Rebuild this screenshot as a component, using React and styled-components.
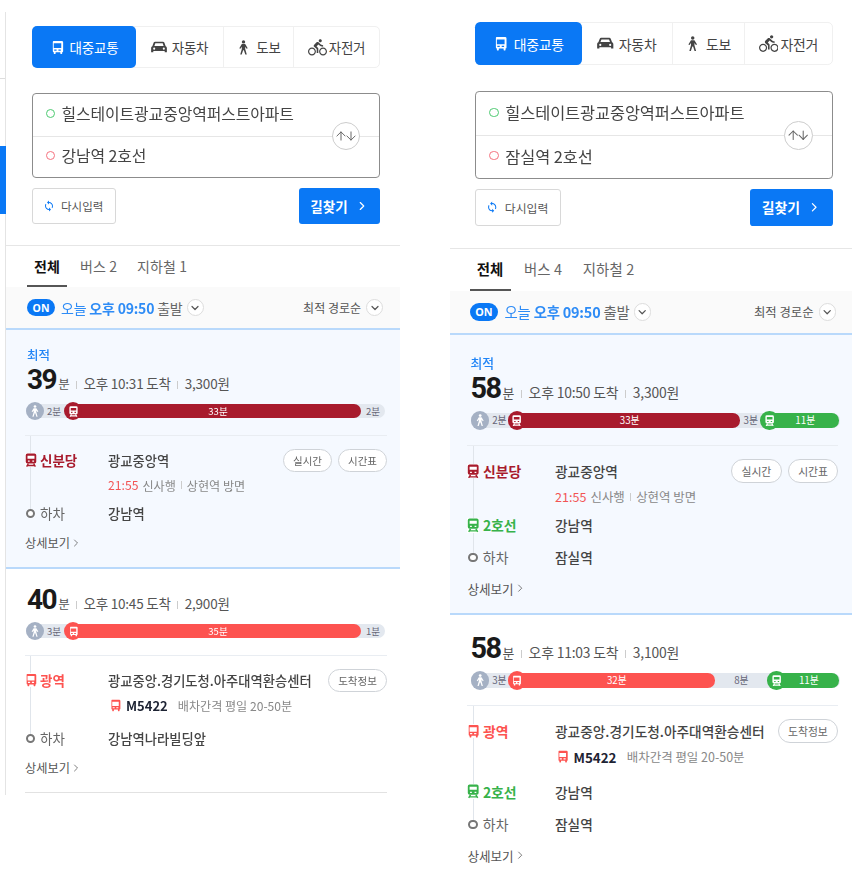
import React from "react";
import styled, { createGlobalStyle } from "styled-components";
import { ChevronDown, ChevronRight, ArrowUp, ArrowDown } from "lucide-react";
import { MdDirectionsBike, MdSync } from "react-icons/md";

const Global = createGlobalStyle`
  html, body { margin: 0; padding: 0; background: #fff; height: 870px; overflow: hidden; }
  * { box-sizing: border-box; }
  body { font-family: "Noto Sans CJK KR", "Noto Sans", sans-serif; color: #333; }
`;

const BLUE = "#0a78f5";
const WINE = "#a81b2d";
const RED = "#fd5350";
const GREEN = "#37b24a";

const Page = styled.div`
  display: flex;
  align-items: flex-start;
  width: 852px;
  height: 870px;
  overflow: hidden;
  filter: blur(0.35px);
`;
const Rail = styled.div`
  flex: none;
  width: 6px;
  height: 783px;
  margin-top: 12px;
  border-right: 1px solid #e4e4e4;
  padding-top: 134px;
  position: relative;
  &::before {
    content: "";
    position: absolute;
    left: 0;
    top: 66px;
    width: 5px;
    height: 1px;
    background: #ddd;
  }
`;
const RailMark = styled.div`
  width: 6px;
  height: 68px;
  background: ${BLUE};
`;
const Panel = styled.section`
  flex: none;
  width: ${p => p.$width}px;
  margin-left: ${p => p.$offset}px;
  zoom: ${p => p.$zoom};
  background: #fff;
`;
const Search = styled.div`
  padding: ${p => p.$top}px 0 21px ${p => p.$inset}px;
  border-bottom: 1px solid #e6e6e6;
`;
const Modes = styled.div`
  display: grid;
  grid-template-columns: 103px 87px 70px 86px;
  width: 348px;
  height: 42px;
  border: 1px solid #f0f0f0;
  border-radius: 5px;
`;
const Mode = styled.div`
  display: flex;
  align-items: center;
  justify-content: center;
  gap: ${p => p.$gap || 5}px;
  margin: ${p => (p.$active ? "-1px 0 -1px -1px" : "0")};
  font-size: 13.5px;
  letter-spacing: -0.2px;
  color: ${p => (p.$active ? "#fff" : "#444")};
  background: ${p => (p.$active ? BLUE : "transparent")};
  border-radius: ${p => (p.$active ? "5px" : "0")};
  border-left: ${p => (p.$divided ? "1px solid #f0f0f0" : "none")};
`;
const Route = styled.div`
  position: relative;
  width: 348px;
  height: 85px;
  margin-top: 25px;
  border: 1px solid #8c8c8c;
  border-radius: 4px;
`;
const Place = styled.div`
  display: flex;
  align-items: center;
  gap: 6.5px;
  height: 41.5px;
  padding: 0 0 2px 13px;
  font-size: 15.9px;
  letter-spacing: -0.1px;
  color: #444;
  & + & { border-top: 1px solid #e6e6e6; }
`;
const Dot = styled.span`
  flex: none;
  width: 9px;
  height: 9px;
  border-radius: 50%;
  border: 1.5px solid ${p => p.$color};
`;
const Swap = styled.div`
  position: absolute;
  right: 19px;
  top: 28px;
  width: 28px;
  height: 28px;
  display: flex;
  align-items: center;
  justify-content: center;
  border: 1px solid #ccc;
  border-radius: 50%;
  background: #fff;
  color: #666;
`;
const Actions = styled.div`
  display: flex;
  justify-content: space-between;
  width: 348px;
  margin-top: 10px;
`;
const Reset = styled.div`
  display: flex;
  align-items: center;
  gap: 6px;
  width: 84px;
  height: 36px;
  padding-left: 10px;
  border: 1px solid #d8d8d8;
  border-radius: 3px;
  font-size: 11.5px;
  color: #555;
`;
const Go = styled.div`
  display: flex;
  align-items: center;
  justify-content: center;
  gap: 7px;
  width: 81px;
  height: 36px;
  background: ${BLUE};
  color: #fff;
  border-radius: 3px;
  font-size: 13.5px;
  font-weight: 700;
`;
const Tabs = styled.nav`
  display: flex;
  height: 41px;
  padding-left: ${p => p.$inset}px;
`;
const Tab = styled.div`
  display: flex;
  align-items: center;
  padding: 0 7px;
  margin-right: 6px;
  font-size: 14px;
  letter-spacing: 0.1px;
  color: ${p => (p.$active ? "#111" : "#666")};
  font-weight: ${p => (p.$active ? 700 : 400)};
  border-bottom: 2px solid ${p => (p.$active ? "#555" : "transparent")};
`;
const Filter = styled.div`
  display: flex;
  align-items: center;
  justify-content: space-between;
  height: 41px;
  padding: 0 ${p => 17 - p.$edge}px 0 ${p => 21 - p.$edge}px;
  background: #fafafa;
`;
const FilterGroup = styled.div`
  display: flex;
  align-items: center;
  gap: ${p => p.$gap}px;
`;
const OnPill = styled.span`
  display: inline-flex;
  align-items: center;
  justify-content: center;
  width: 28px;
  height: 17px;
  margin-right: 2px;
  background: ${BLUE};
  color: #fff;
  border-radius: 9px;
  font-family: "Noto Sans", sans-serif;
  font-size: 10.5px;
  font-weight: 700;
`;
const DepartText = styled.span`
  font-size: 14px;
  letter-spacing: -0.2px;
  color: #666;
`;
const Blue = styled.span`
  color: ${BLUE};
  opacity: 0.85;
  font-weight: ${p => (p.$bold ? 700 : 400)};
`;
const SortText = styled.span`
  font-size: 12px;
  color: #555;
`;
const Caret = styled.span`
  display: inline-flex;
  align-items: center;
  justify-content: center;
  width: 17px;
  height: 17px;
  border: 1px solid #ddd;
  border-radius: 50%;
  background: #fff;
  color: #555;
`;
const Card = styled.article`
  padding: ${p => p.$lead}px 13px 16px ${p => 19 - p.$edge}px;
  background: ${p => (p.$best ? "#f5f9ff" : "#fff")};
  ${p => (p.$best ? "border-top: 2px solid #b9d9fb; border-bottom: 2px solid #b9d9fb;" : "")}
`;
const CardEnd = styled.div`
  margin: 0 13px 0 19px;
  height: 1px;
  background: #e2e2e2;
`;
const BestTag = styled.div`
  margin-left: ${p => 2 + p.$edge / 2}px;
  height: 18px;
  line-height: 16px;
  font-size: 12.5px;
  color: ${BLUE};
  font-weight: 500;
  opacity: 0.9;
`;
const Summary = styled.div`
  display: flex;
  align-items: baseline;
  height: 30px;
  line-height: 30px;
  margin-left: ${p => 2 + p.$edge / 2}px;
  color: #555;
  font-size: 13.5px;
  letter-spacing: -0.2px;
`;
const Minutes = styled.strong`
  font-family: Roboto, "Liberation Sans", sans-serif;
  font-size: 28px;
  font-weight: 700;
  letter-spacing: -1.5px;
  color: #1a1a1a;
`;
const Unit = styled.span`
  font-size: 12.5px;
  margin-left: 2px;
`;
const Sep = styled.span`
  display: inline-block;
  width: 1px;
  height: 8px;
  margin: 0 6.5px;
  background: #ccc;
`;
const Track = styled.div`
  display: flex;
  align-items: center;
  width: 359px;
  height: 14px;
  margin: 9px 0 0 ${p => 1 + p.$edge}px;
  background: #e3e8ef;
  border-radius: 7px;
`;
const WalkSeg = styled.div`
  flex: none;
  display: flex;
  align-items: center;
  gap: 3px;
  width: ${p => p.$w}px;
  font-size: 9.5px;
  color: #667;
`;
const WalkBadge = styled.span`
  flex: none;
  display: flex;
  align-items: center;
  justify-content: center;
  width: 18px;
  height: 18px;
  border-radius: 50%;
  background: #a5b1c4;
  color: #fff;
`;
const RideSeg = styled.div`
  flex: none;
  position: relative;
  display: flex;
  align-items: center;
  justify-content: center;
  width: ${p => p.$w}px;
  height: 14px;
  padding-left: 10px;
  background: ${p => p.$color};
  border-radius: 7px;
  font-size: 9.5px;
  color: #fff;
`;
const RideBadge = styled.span`
  position: absolute;
  left: -1px;
  top: -2px;
  width: 18px;
  height: 18px;
  display: flex;
  align-items: center;
  justify-content: center;
  border-radius: 50%;
  background: ${p => p.$color};
  color: #fff;
`;
const GapSeg = styled.div`
  flex: none;
  width: ${p => p.$w}px;
  text-align: center;
  font-size: 9.5px;
  color: #667;
`;
const Legs = styled.div`
  position: relative;
  margin-top: 17px;
  padding-top: 12px;
  border-top: 1px solid #e9edf2;
  &::before {
    content: "";
    position: absolute;
    left: 5px;
    top: 0;
    bottom: 12px;
    width: 1px;
    background: #e0e5eb;
  }
`;
const Leg = styled.div`
  position: relative;
  display: grid;
  grid-template-columns: ${p => 83 + p.$edge}px 1fr auto;
  align-items: center;
  height: 24px;
  margin-top: ${p => p.$gap || 0}px;
`;
const LegLabel = styled.div`
  display: flex;
  align-items: center;
  gap: 4px;
  font-size: 13.5px;
  font-weight: ${p => (p.$plain ? 400 : 700)};
  color: ${p => p.$color};
`;
const LegIcon = styled.span`
  display: flex;
  width: 11px;
  height: 14px;
  align-items: center;
  justify-content: center;
  background: #fff;
`;
const StopRing = styled.span`
  flex: none;
  width: 9px;
  height: 9px;
  margin: 0 1px 0 1px;
  border-radius: 50%;
  border: 2px solid #777;
  background: #fff;
`;
const Stop = styled.div`
  font-size: 13.3px;
  font-weight: 500;
  color: #444;
  white-space: nowrap;
`;
const Pills = styled.div`
  display: flex;
  gap: 6px;
`;
const Pill = styled.span`
  display: flex;
  align-items: center;
  justify-content: center;
  width: ${p => p.$w}px;
  height: 23px;
  border: 1px solid #cfd3d8;
  border-radius: 12px;
  background: #fff;
  font-size: 10.5px;
  color: #666;
`;
const Note = styled.div`
  display: flex;
  align-items: center;
  height: 24px;
  margin: 1px 0 0 ${p => 83 + p.$edge}px;
  font-size: 12.1px;
  color: #888;
`;
const Clock = styled.span`
  color: #f25454;
  margin-right: 4px;
  font-size: 12.2px;
`;
const NoteSep = styled.span`
  display: inline-block;
  width: 1px;
  height: 8px;
  margin: 0 5px;
  background: #ccc;
`;
const BusNo = styled.span`
  display: flex;
  align-items: center;
  gap: 4px;
  margin: 0 10px 0 1px;
  font-size: 13px;
  font-weight: 700;
  color: #1d2333;
`;
const More = styled.div`
  display: flex;
  align-items: center;
  height: 16px;
  margin-top: 10px;
  font-size: 12.2px;
  color: #555;
`;

const BusIcon = ({ size = 14, color = "currentColor" }) => (
  <svg width={size} height={size} viewBox="0 0 16 16" fill="none" style={{ flex: "none" }}>
    <path fillRule="evenodd" clipRule="evenodd" fill={color}
      d="M3.500 1h9A1.500 1.500 0 0 1 14 2.500V12a1 1 0 0 1-1 1v1.500a.5.5 0 0 1-.5.5h-1a.5.5 0 0 1-.5-.5V13H6v1.500a.5.5 0 0 1-.5.5h-1a.5.5 0 0 1-.5-.5V13a1 1 0 0 1-1-1V2.500A1.500 1.500 0 0 1 3.500 1ZM4 3.500v5h8v-5H4Zm.5 6.500v1.500H7V10H4.500Zm4.500 0v1.500h2.500V10H9Z" />
  </svg>
);
const SubwayIcon = ({ size = 14, color = "currentColor" }) => (
  <svg width={size} height={size} viewBox="0 0 16 16" fill="none" style={{ flex: "none" }}>
    <path fillRule="evenodd" clipRule="evenodd" fill={color}
      d="M4 0.500h8A2 2 0 0 1 14 2.500V10a2 2 0 0 1-2 2H4a2 2 0 0 1-2-2V2.500A2 2 0 0 1 4 .500ZM4 3v3.500h8V3H4Zm.5 5.500V10h2V8.500h-2Zm5 0V10h2V8.500h-2Z" />
    <path stroke={color} strokeWidth="1.600" d="M5 12 3 15.500M11 12l2 3.500M4 14.300h8" />
  </svg>
);
const CarIcon = () => (
  <svg width="16" height="14" viewBox="0 0 18 16" fill="currentColor">
    <path fillRule="evenodd" clipRule="evenodd"
      d="M4.500 2h9c.8 0 1.400.5 1.700 1.200L16.600 7c.8.400 1.400 1.200 1.400 2.200V14h-2.500v-1.500h-13V14H0V9.200C0 8.200.6 7.400 1.400 7l1.400-3.800C3.100 2.500 3.700 2 4.500 2Zm.3 1.800L3.700 6.800h10.600l-1.100-3H4.800ZM3.500 8.700a1.200 1.200 0 1 0 0 2.400 1.200 1.200 0 0 0 0-2.400Zm11 0a1.200 1.200 0 1 0 0 2.400 1.200 1.200 0 0 0 0-2.400Z" />
  </svg>
);
const WalkIcon = ({ size = 14 }) => (
  <svg width={size} height={size} viewBox="0 0 14 16" fill="currentColor">
    <circle cx="7" cy="2" r="1.800" />
    <path d="M5.200 4.300h3.600l2.700 4.400-1.200.7-1.500-2.200v2.300l1.700 6h-1.600L7.400 11h-.8l-1.500 4.500H3.500l1.700-6V7.200L3.700 9.400l-1.200-.7 2.700-4.400Z" />
  </svg>
);

const Depart = ({ edge }) => (
  <Filter $edge={edge}>
    <FilterGroup $gap={4}>
      <OnPill>ON</OnPill>
      <DepartText>
        <Blue>오늘 </Blue><Blue $bold>오후 09:50</Blue> 출발
      </DepartText>
      <Caret><ChevronDown size={12} strokeWidth={2.4} /></Caret>
    </FilterGroup>
    <FilterGroup $gap={5}>
      <SortText>최적 경로순</SortText>
      <Caret><ChevronDown size={12} strokeWidth={2.4} /></Caret>
    </FilterGroup>
  </Filter>
);

const Bar = ({ segs, edge }) => (
  <Track $edge={edge}>
    {segs.map((s, i) => {
      if (s.walk) return <WalkSeg key={i} $w={s.w}><WalkBadge><WalkIcon size={12} /></WalkBadge>{s.t}</WalkSeg>;
      if (s.color) {
        const Ic = s.color === RED ? BusIcon : SubwayIcon;
        return <RideSeg key={i} $w={s.w} $color={s.color}><RideBadge $color={s.color}><Ic size={11} /></RideBadge>{s.t}</RideSeg>;
      }
      return <GapSeg key={i} $w={s.w}>{s.t}</GapSeg>;
    })}
  </Track>
);

const Item = ({ r, edge }) => (
  <Card $best={r.best} $edge={edge} $lead={r.lead}>
    {r.best && <BestTag $edge={edge}>최적</BestTag>}
    <Summary $edge={edge}>
      <Minutes>{r.min}</Minutes><Unit>분</Unit>
      <Sep />오후 {r.arrive} 도착<Sep />{r.fare}원
    </Summary>
    <Bar segs={r.segs} edge={edge} />
    <Legs>
      {r.legs.map((l, i) => (
        <React.Fragment key={i}>
          <Leg $gap={l.gap} $edge={edge}>
            <LegLabel $color={l.color || "#666"} $plain={!l.color}>
              {l.kind === "bus" && <LegIcon><BusIcon size={14} color={l.color} /></LegIcon>}
              {l.kind === "sub" && <LegIcon><SubwayIcon size={14} color={l.color} /></LegIcon>}
              {!l.kind && <StopRing />}
              {l.label}
            </LegLabel>
            <Stop>{l.stop}</Stop>
            {l.pills && (
              <Pills>
                {l.pills.map(p => <Pill key={p[0]} $w={p[1]}>{p[0]}</Pill>)}
              </Pills>
            )}
          </Leg>
          {l.train && (
            <Note $edge={edge}>
              <Clock>21:55</Clock>신사행<NoteSep />상현역 방면
            </Note>
          )}
          {l.bus && (
            <Note $edge={edge}>
              <BusNo><BusIcon size={13} color={RED} />M5422</BusNo>배차간격 평일 20-50분
            </Note>
          )}
        </React.Fragment>
      ))}
    </Legs>
    <More>상세보기<ChevronRight size={12} strokeWidth={1.5} /></More>
  </Card>
);

const Column = ({ to, bus, subway, routes, width, offset, zoom, top, inset, edge }) => (
  <Panel $width={width} $offset={offset} $zoom={zoom}>
    <Search $top={top} $inset={inset}>
      <Modes>
        <Mode $active><BusIcon size={15} />대중교통</Mode>
        <Mode><CarIcon />자동차</Mode>
        <Mode $divided><WalkIcon size={15} />도보</Mode>
        <Mode $divided $gap={2}><MdDirectionsBike size={19} />자전거</Mode>
      </Modes>
      <Route>
        <Place><Dot $color="#4cc970" />힐스테이트광교중앙역퍼스트아파트</Place>
        <Place><Dot $color="#f4727f" />{to}</Place>
        <Swap>
          <ArrowUp size={14} strokeWidth={1.7} style={{ marginRight: -4 }} />
          <ArrowDown size={14} strokeWidth={1.7} />
        </Swap>
      </Route>
      <Actions>
        <Reset><MdSync size={12} color={BLUE} />다시입력</Reset>
        <Go>길찾기<ChevronRight size={14} strokeWidth={2} /></Go>
      </Actions>
    </Search>
    <Tabs $inset={21 - edge}>
      <Tab $active>전체</Tab>
      <Tab>버스 {bus}</Tab>
      <Tab>지하철 {subway}</Tab>
    </Tabs>
    <Depart edge={edge} />
    {routes.map((r, i) => <Item key={i} r={r} edge={edge} />)}
    <CardEnd />
  </Panel>
);

const trainPills = [["실시간", 49], ["시간표", 49]];
const bundang = { kind: "sub", color: WINE, label: "신분당", stop: "광교중앙역", pills: trainPills, train: true };
const gwangyeok = { kind: "bus", color: RED, label: "광역", stop: "광교중앙.경기도청.아주대역환승센터", pills: [["도착정보", 59]], bus: true };

const leftRoutes = [
  {
    best: true, lead: 17, min: 39, arrive: "10:31", fare: "3,300",
    segs: [{ walk: true, t: "2분", w: 39 }, { color: WINE, t: "33분", w: 296 }, { t: "2분", w: 24 }],
    legs: [bundang, { label: "하차", stop: "강남역", gap: 4 }],
  },
  {
    lead: 16, min: 40, arrive: "10:45", fare: "2,900",
    segs: [{ walk: true, t: "3분", w: 39 }, { color: RED, t: "35분", w: 296 }, { t: "1분", w: 24 }],
    legs: [gwangyeok, { label: "하차", stop: "강남역나라빌딩앞", gap: 9 }],
  },
];
const rightRoutes = [
  {
    best: true, lead: 19, min: 58, arrive: "10:50", fare: "3,300",
    segs: [{ walk: true, t: "2분", w: 37 }, { color: WINE, t: "33분", w: 225 }, { t: "3분", w: 20 }, { color: GREEN, t: "11분", w: 76 }],
    legs: [bundang, { kind: "sub", color: GREEN, label: "2호선", stop: "강남역", gap: 4 }, { label: "하차", stop: "잠실역", gap: 7 }],
  },
  {
    lead: 17.5, min: 58, arrive: "11:03", fare: "3,100",
    segs: [{ walk: true, t: "3분", w: 37 }, { color: RED, t: "32분", w: 200 }, { t: "8분", w: 52 }, { color: GREEN, t: "11분", w: 69 }],
    legs: [gwangyeok, { kind: "sub", color: GREEN, label: "2호선", stop: "강남역", gap: 10 }, { label: "하차", stop: "잠실역", gap: 8 }],
  },
];

export default function App() {
  return (
    <Page>
      <Global />
      <Rail><RailMark /></Rail>
      <Column to="강남역 2호선" bus={2} subway={1} routes={leftRoutes} width={394} offset={0} zoom={1} top={26} inset={26} edge={0} />
      <Column to="잠실역 2호선" bus={4} subway={2} routes={rightRoutes} width={390} offset={48.5} zoom={1.03} top={21.4} inset={24.3} edge={2} />
    </Page>
  );
}
